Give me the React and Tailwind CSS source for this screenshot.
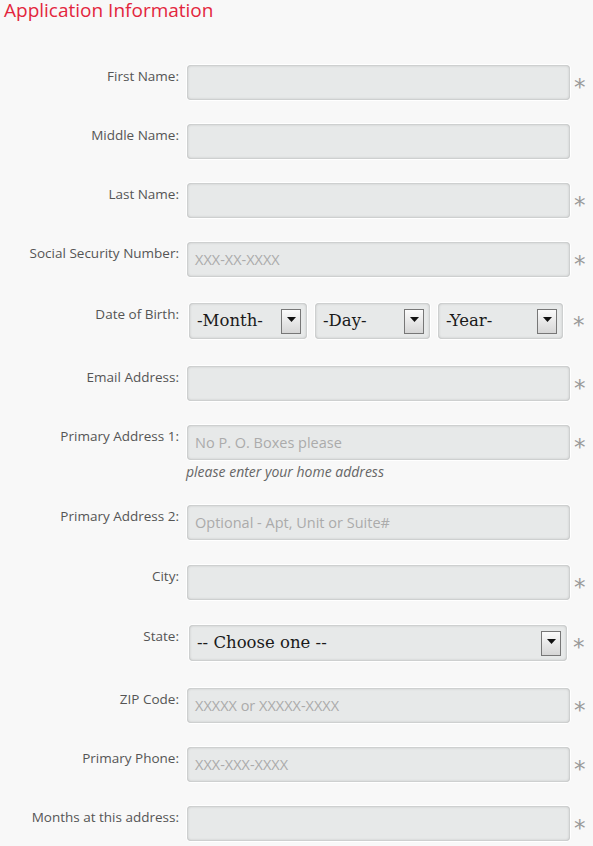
const fields = [
  { label: "First Name:", required: true, mt: "mt-[24px]" },
  { label: "Middle Name:", mt: "mt-[24px]" },
  { label: "Last Name:", required: true, mt: "mt-[24px]" },
  { label: "Social Security Number:", placeholder: "XXX-XX-XXXX", required: true, mt: "mt-[24px]" },
];

const fieldsAfter = [
  { label: "Email Address:", required: true, mt: "mt-[27px]" },
  {
    label: "Primary Address 1:",
    placeholder: "No P. O. Boxes please",
    required: true,
    hint: "please enter your home address",
    mt: "mt-[24px]",
  },
  { label: "Primary Address 2:", placeholder: "Optional - Apt, Unit or Suite#", mt: "mt-[24px]" },
  { label: "City:", required: true, mt: "mt-[25px]" },
];

const fieldsEnd = [
  { label: "ZIP Code:", placeholder: "XXXXX or XXXXX-XXXX", required: true, mt: "mt-[27px]" },
  { label: "Primary Phone:", placeholder: "XXX-XXX-XXXX", required: true, mt: "mt-[24px]" },
  { label: "Months at this address:", required: true, mt: "mt-[24px]" },
];

// required-field marker, kept shorter than the inputs so rows don't grow
const Asterisk = ({ show }) => (
  <div className="h-[34px] w-[20px] pl-[4px] pt-[10px] text-[23px] leading-[24px] text-[#9a9a9a] font-['DejaVu_Sans',sans-serif]">
    {show ? "*" : ""}
  </div>
);

const Label = ({ children }) => (
  <div className="w-[179px] shrink-0 pt-[2px] text-right text-[13.5px] leading-[18px] text-[#555]">
    {children}
  </div>
);

const TextRow = ({ label, placeholder, required, hint, mt }) => (
  <div className={mt}>
    <div className="flex">
      <Label>{label}</Label>
      <div className="ml-[8px] h-[35px] w-[383px] rounded-[4px] bg-[#e7e9e9] shadow-[inset_0_0_3px_rgba(0,0,0,0.3),0_0_0_1px_#fff] pl-[8px] flex items-center text-[14.5px] text-[#ababab]">
        {placeholder}
      </div>
      <Asterisk show={required} />
    </div>
    {hint && (
      <div className="ml-[186px] mt-[3px] text-[14px] leading-[18px] italic text-[#666]">{hint}</div>
    )}
  </div>
);

const Arrow = () => (
  <div className="h-[25px] w-[20px] border border-[#777] bg-gradient-to-b from-[#fbfbfb] to-[#d6d6d6] flex justify-center pt-[7px]">
    <svg width="9" height="5" viewBox="0 0 9 5">
      <path d="M0 0h9L4.5 5z" fill="#111" />
    </svg>
  </div>
);

const Select = ({ text, width }) => (
  <div
    className={`${width} h-[36px] rounded-[4px] bg-[#e7e9e9] shadow-[inset_0_0_3px_rgba(0,0,0,0.3),0_0_0_1px_#fff] flex items-center justify-between pl-[8px] pr-[6px] text-[16.5px] text-[#1a1a1a] font-['DejaVu_Serif',serif]`}
  >
    <span>{text}</span>
    <Arrow />
  </div>
);

export default function App() {
  return (
    <div className="min-h-[846px] w-[593px] bg-[#f8f8f8] font-['Open_Sans',sans-serif] overflow-hidden">
      <h1 className="pl-[4px] -mt-[4px] text-[19px] leading-[28px] text-[#e3263d]">Application Information</h1>

      <div className="mt-[41px]">
        {fields.map((f) => (
          <TextRow key={f.label} {...f} />
        ))}

        <div className="mt-[26px] flex">
          <Label>Date of Birth:</Label>
          <div className="ml-[10px] flex gap-[8px]">
            <Select text="-Month-" width="w-[118px]" />
            <Select text="-Day-" width="w-[115px]" />
            <Select text="-Year-" width="w-[125px]" />
          </div>
          <div className="ml-[6px]">
            <Asterisk show />
          </div>
        </div>

        {fieldsAfter.map((f) => (
          <TextRow key={f.label} {...f} />
        ))}

        <div className="mt-[25px] flex">
          <Label>State:</Label>
          <div className="ml-[10px]">
            <Select text="-- Choose one --" width="w-[378px]" />
          </div>
          <div className="ml-[2px]">
            <Asterisk show />
          </div>
        </div>

        {fieldsEnd.map((f) => (
          <TextRow key={f.label} {...f} />
        ))}
      </div>
    </div>
  );
}
